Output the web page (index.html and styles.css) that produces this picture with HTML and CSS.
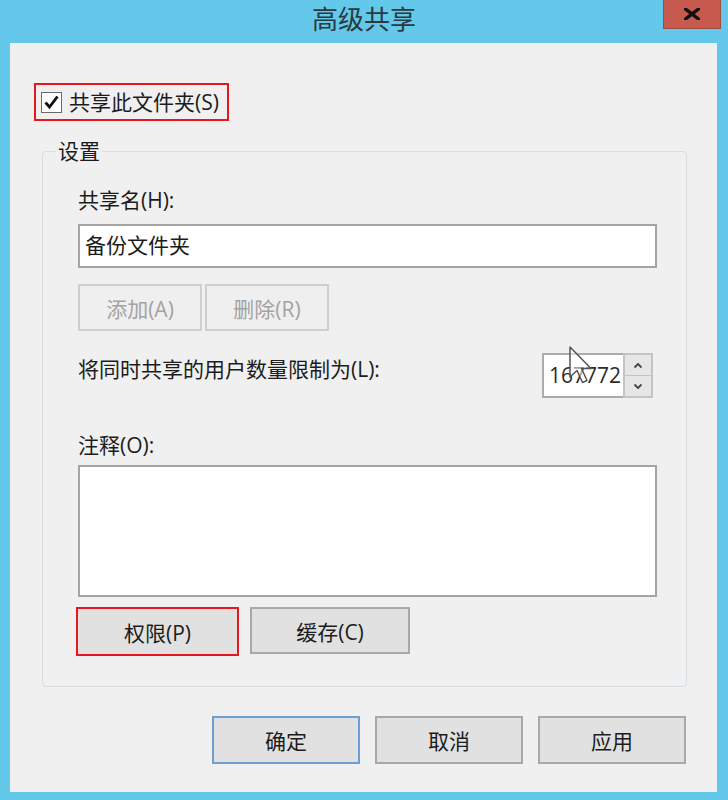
FILE: index.html
```html
<!DOCTYPE html>
<html lang="zh-CN">
<head>
  <meta charset="UTF-8">
  <title>高级共享</title>
  <link rel="stylesheet" href="styles.css">
</head>
<body>
  <div class="window">
    <div class="titlebar">
      <span></span>
      <div class="title">高级共享</div>
      <div class="close-cell">
        <button class="close" aria-label="关闭">
          <svg width="16" height="12" viewBox="0 0 16 12"><path d="M1.5 1 L14.5 11 M14.5 1 L1.5 11" stroke="#111" stroke-width="3.4" stroke-linecap="square"/></svg>
        </button>
      </div>
    </div>
    <div class="panel">
      <label class="share-check">
        <span class="checkbox">
          <svg width="19" height="19" viewBox="0 0 19 19"><path d="M3.5 9.5 L7.5 14 L15.5 3.5" fill="none" stroke="#111" stroke-width="2.8"/></svg>
        </span>
        <span>共享此文件夹(S)</span>
      </label>

      <fieldset class="group">
        <legend>设置</legend>
        <div class="group-body">
          <div class="label">共享名(H):</div>
          <div class="textbox">备份文件夹</div>
          <div class="btn-row small-btns">
            <button class="btn disabled">添加(A)</button>
            <button class="btn disabled">删除(R)</button>
          </div>
          <div class="limit-row">
            <div class="label">将同时共享的用户数量限制为(L):</div>
            <div class="spin">
              <div class="spin-value">167772</div>
              <div class="spin-arrows">
                <span class="arrow"><svg width="10" height="7" viewBox="0 0 10 7"><path d="M1.5 5.5 L5 2 L8.5 5.5" fill="none" stroke="#444" stroke-width="1.8"/></svg></span>
                <span class="arrow"><svg width="10" height="7" viewBox="0 0 10 7"><path d="M1.5 1.5 L5 5 L8.5 1.5" fill="none" stroke="#444" stroke-width="1.8"/></svg></span>
              </div>
              <svg class="cursor" width="24" height="38" viewBox="0 0 24 38">
                <path d="M1 1 L1 31 L8 24.5 L13.5 36.5 L18 34.5 L12.5 22.5 L22 22.5 Z" fill="rgba(255,255,255,0.55)" stroke="#555" stroke-width="1.5" stroke-linejoin="round"/>
              </svg>
            </div>
          </div>
          <div class="label comment-label">注释(O):</div>
          <div class="textarea"></div>
          <div class="btn-row big-btns">
            <button class="btn marked">权限(P)</button>
            <button class="btn">缓存(C)</button>
          </div>
        </div>
      </fieldset>

      <div class="dialog-btns">
        <button class="btn default">确定</button>
        <button class="btn">取消</button>
        <button class="btn">应用</button>
      </div>
    </div>
  </div>
</body>
</html>
```

FILE: styles.css
```css
body { margin: 0; background: #63c8e9; font-family: "Open Sans", "Noto Sans CJK SC", sans-serif; font-size: 21px; color: #1c1c1c; }
.window { width: 728px; height: 800px; display: flex; flex-direction: column; }

.titlebar { height: 43px; display: grid; grid-template-columns: 1fr auto 1fr; }
.title { font-size: 26px; line-height: 38px; color: #2a3a40; }
.close-cell { display: flex; justify-content: flex-end; align-items: flex-start; padding-right: 7px; }
.close { width: 58px; height: 29px; background: #c65a4e; border: 1px solid #9e4a40; border-top: none; padding: 0; display: flex; align-items: center; justify-content: center; }

.panel { margin-left: 10px; width: 707px; height: 749px; box-sizing: border-box; background: #f0f0f0; padding-top: 40px; }

.share-check { display: flex; align-items: center; gap: 7px; width: 195px; height: 38px; box-sizing: border-box; margin-left: 24px; padding-left: 5px; border: 2px solid #e8161e; line-height: 24px; }
.checkbox { width: 21px; height: 21px; box-sizing: border-box; border: 1px solid #6a6a6a; background: #fff; display: flex; align-items: center; justify-content: center; }

.group { margin: 18px 30px 0 32px; padding: 0 0 30px 0; border: 1px solid #d6dee4; border-radius: 4px; min-width: 0; }
.group legend { margin-left: 13px; padding: 0 2px; line-height: 24px; }
.group-body { padding: 0 29px 0 35px; }

.label { line-height: 24px; }
.group-body > .label:first-child { margin-top: 25px; }

.textbox { margin-top: 12px; height: 44px; box-sizing: border-box; border: 2px solid #a4a4a4; background: #fff; padding-left: 5px; line-height: 38px; }

.btn-row { display: flex; }
.btn { font: inherit; color: #1c1c1c; background: #e1e1e1; border: 2px solid #a8a8a8; padding: 0; }
.small-btns { margin-top: 16px; gap: 3px; }
.small-btns .btn { width: 124px; height: 47px; }
.btn.disabled { background: #efefef; border-color: #cfcfcf; color: #a3a3a3; }

.limit-row { display: flex; align-items: flex-start; margin-top: 22px; }
.limit-row .label { margin-top: 4px; }
.spin { position: relative; margin-left: auto; margin-right: 4px; display: flex; height: 45px; }
.spin-value { width: 81px; box-sizing: border-box; border: 2px solid #acacac; border-right: none; background: #fff; padding-left: 5px; line-height: 41px; color: #2c2c2c; overflow: hidden; white-space: nowrap; }
.spin-arrows { width: 30px; display: flex; flex-direction: column; border: 2px solid #c4c4c4; box-sizing: border-box; gap: 1px; background: #c4c4c4; }
.arrow { flex: 1; background: #e6e6e6; display: flex; align-items: center; justify-content: center; }
.cursor { position: absolute; left: 27px; top: -7px; }

.comment-label { margin-top: 35px; }
.textarea { margin-top: 8px; height: 132px; box-sizing: border-box; border: 2px solid #a4a4a4; background: #fff; }

.big-btns { margin-top: 10px; gap: 11px; align-items: flex-start; }
.big-btns .btn { width: 160px; height: 47px; }
.big-btns .btn.marked { width: 163px; height: 49px; margin-left: -2px; border-color: #e8161e; }

.dialog-btns { display: flex; justify-content: flex-end; gap: 15px; margin-top: 29px; padding-right: 31px; }
.dialog-btns .btn { width: 148px; height: 48px; }
.dialog-btns .btn.default { border-color: #6d9fd0; }
```
